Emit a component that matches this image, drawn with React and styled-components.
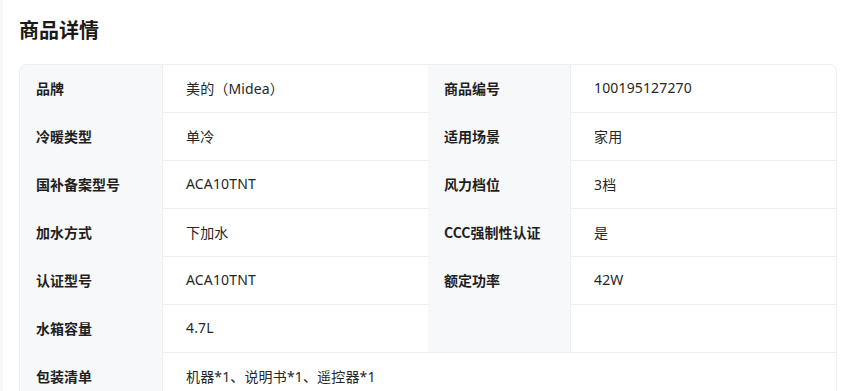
import React from "react";
import styled, { createGlobalStyle } from "styled-components";

const Global = createGlobalStyle`
  html, body { margin: 0; padding: 0; background: #f7f8fa; }
  body { font-family: "Noto Sans", "Noto Sans CJK SC", sans-serif; }
`;

const Page = styled.div`
  margin-left: 3px;
  background: #ffffff;
  min-height: 391px;
  padding: 16px 9px 0 16px;
  box-sizing: border-box;
`;

const Title = styled.h2`
  margin: 0 0 20px 0;
  height: 28px;
  line-height: 28px;
  font-size: 20px;
  font-weight: 700;
  color: #1a1a1a;
  font-family: "Noto Sans CJK SC", sans-serif;
`;

const Card = styled.div`
  display: grid;
  grid-template-columns: 143px 1fr 143px 1fr;
  grid-auto-rows: 48px;
  border: 1px solid #eceef1;
  border-radius: 8px;
  overflow: hidden;
`;

const Label = styled.div`
  display: flex;
  align-items: center;
  padding: 0 0 3px 16px;
  background: #f7f8fa;
  border-right: 1px solid #eceef1;
  border-bottom: ${(p) => (p.$bottom ? "1px solid #eceef1" : "none")};
  font-size: 14px;
  font-weight: 700;
  color: #1f1f1f;
  font-family: "Noto Sans CJK SC", sans-serif;
`;

const Value = styled.div`
  display: flex;
  align-items: center;
  padding: 0 0 2px 23px;
  border-bottom: 1px solid #eceef1;
  grid-column: ${(p) => (p.$span ? `span ${p.$span}` : "auto")};
  font-size: 14px;
  letter-spacing: 0.15px;
  color: #262626;
  font-family: "Noto Sans", "Noto Sans CJK SC", sans-serif;
`;

const rows = [
  ["品牌", "美的（Midea）", "商品编号", "100195127270"],
  ["冷暖类型", "单冷", "适用场景", "家用"],
  ["国补备案型号", "ACA10TNT", "风力档位", "3档"],
  ["加水方式", "下加水", "CCC强制性认证", "是"],
  ["认证型号", "ACA10TNT", "额定功率", "42W"],
  ["水箱容量", "4.7L", "", ""],
];

export default function App() {
  return (
    <>
      <Global />
      <Page>
        <Title>商品详情</Title>
        <Card>
          {rows.map((r, i) => (
            <React.Fragment key={i}>
              <Label>{r[0]}</Label>
              <Value>{r[1]}</Value>
              <Label $bottom={i === rows.length - 1}>{r[2]}</Label>
              <Value>{r[3]}</Value>
            </React.Fragment>
          ))}
          <Label>包装清单</Label>
          <Value $span={3}>机器*1、说明书*1、遥控器*1</Value>
        </Card>
      </Page>
    </>
  );
}
